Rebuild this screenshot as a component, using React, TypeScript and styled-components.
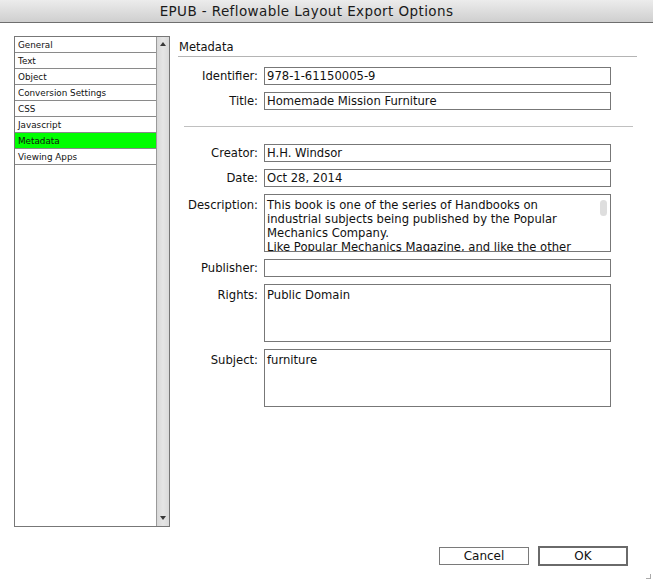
import React from 'react';
import styled, { createGlobalStyle } from 'styled-components';

const GlobalStyle = createGlobalStyle`
  html, body {
    margin: 0;
    padding: 0;
    background: #ffffff;
  }
  body {
    font-family: 'DejaVu Sans', 'Liberation Sans', sans-serif;
    color: #111;
  }
`;

const Window = styled.div`
  width: 653px;
  height: 581px;
  display: flex;
  flex-direction: column;
  background: #ffffff;
  position: relative;
  overflow: hidden;
`;

const TitleBar = styled.div`
  height: 22px;
  flex-shrink: 0;
  display: flex;
  align-items: center;
  justify-content: center;
  padding-right: 40px;
  background: linear-gradient(180deg, #ececec 0%, #dcdcdc 55%, #cfcfcf 100%);
  border-bottom: 1px solid #6e6e6e;
  font-size: 13.5px;
  letter-spacing: 0.4px;
  color: #1a1a1a;
`;

const Content = styled.div`
  display: flex;
  padding: 13px 16px 0 14px;
  gap: 8px;
`;

const ListBox = styled.div`
  width: 156px;
  height: 491px;
  box-sizing: border-box;
  border: 1px solid #777;
  display: flex;
  flex-shrink: 0;
`;

const ListItems = styled.div`
  flex: 1;
  display: flex;
  flex-direction: column;
`;

const ListItem = styled.div<{ $active?: boolean }>`
  height: 16px;
  box-sizing: border-box;
  border-bottom: 1px solid #8a8a8a;
  padding-left: 3px;
  font-size: 8.8px;
  line-height: 16px;
  background: ${(p) => (p.$active ? '#00ff00' : 'transparent')};
  color: #111;
`;

const ScrollTrack = styled.div`
  width: 13px;
  border-left: 1px solid #9a9a9a;
  background: linear-gradient(90deg, #d8d8d8, #e6e6e6 50%, #dadada);
  display: flex;
  flex-direction: column;
  justify-content: space-between;
  align-items: center;
  padding: 5px 0 6px;
  box-sizing: border-box;
`;

const Arrow = styled.div<{ $down?: boolean }>`
  width: 0;
  height: 0;
  border-left: 3.5px solid transparent;
  border-right: 3.5px solid transparent;
  ${(p) =>
    p.$down
      ? 'border-top: 4px solid #3a3a3a;'
      : 'border-bottom: 4px solid #3a3a3a;'}
`;

const Panel = styled.div`
  flex: 1;
  display: flex;
  flex-direction: column;
`;

const Heading = styled.div`
  font-size: 11.5px;
  padding: 4px 0 0 1px;
  height: 16px;
  border-bottom: 1px solid #b4b4b4;
  margin-bottom: 10px;
`;

const Form = styled.div`
  display: grid;
  grid-template-columns: 80px 347px;
  column-gap: 6px;
  row-gap: 7px;
  align-items: start;
`;

const Label = styled.div<{ $multi?: boolean }>`
  text-align: right;
  font-size: 11.6px;
  line-height: 18px;
  padding-top: ${(p) => (p.$multi ? 2 : 0)}px;
  white-space: nowrap;
`;

const Box = styled.div<{ $h?: number }>`
  position: relative;
  height: ${(p) => p.$h ?? 18}px;
  box-sizing: border-box;
  border: 1px solid #777;
  background: #fff;
  font-size: 11.6px;
  line-height: 14px;
  padding: ${(p) => (p.$h ? '3px' : '1px')} 3px 0 2px;
  overflow: hidden;
  white-space: nowrap;
`;

const Thumb = styled.div`
  position: absolute;
  top: 5px;
  right: 3px;
  width: 7px;
  height: 16px;
  border-radius: 4px;
  background: #dedede;
`;

const Divider = styled.div`
  grid-column: 1 / -1;
  height: 1px;
  background: #c0c0c0;
  margin: 9px -22px 10px 6px;
`;

const Footer = styled.div`
  display: flex;
  justify-content: flex-end;
  gap: 9px;
  padding: 19px 25px 0 0;
  align-items: center;
`;

const Button = styled.div<{ $primary?: boolean }>`
  width: 90px;
  height: ${(p) => (p.$primary ? 20 : 18)}px;
  box-sizing: border-box;
  border: ${(p) => (p.$primary ? '2px solid #6a6a6a' : '1px solid #7a7a7a')};
  background: #fff;
  font-size: 12px;
  display: flex;
  align-items: center;
  justify-content: center;
`;

const Grip = styled.div`
  position: absolute;
  right: 2px;
  bottom: 2px;
  width: 4px;
  height: 4px;
  border-right: 1px solid #aaa;
  border-bottom: 1px solid #aaa;
`;

const sections = [
  'General',
  'Text',
  'Object',
  'Conversion Settings',
  'CSS',
  'Javascript',
  'Metadata',
  'Viewing Apps',
];

const description = [
  'This book is one of the series of Handbooks on',
  'industrial subjects being published by the Popular',
  'Mechanics Company.',
  'Like Popular Mechanics Magazine, and like the other',
];

export default function App() {
  return (
    <Window>
      <GlobalStyle />
      <TitleBar>EPUB - Reflowable Layout Export Options</TitleBar>
      <Content>
        <ListBox>
          <ListItems>
            {sections.map((s) => (
              <ListItem key={s} $active={s === 'Metadata'}>
                {s}
              </ListItem>
            ))}
          </ListItems>
          <ScrollTrack>
            <Arrow />
            <Arrow $down />
          </ScrollTrack>
        </ListBox>
        <Panel>
          <Heading>Metadata</Heading>
          <Form>
            <Label>Identifier:</Label>
            <Box>978-1-61150005-9</Box>
            <Label>Title:</Label>
            <Box>Homemade Mission Furniture</Box>
            <Divider />
            <Label>Creator:</Label>
            <Box>H.H. Windsor</Box>
            <Label>Date:</Label>
            <Box>Oct 28, 2014</Box>
            <Label $multi>Description:</Label>
            <Box $h={58}>
              {description.map((line) => (
                <div key={line}>{line}</div>
              ))}
              <Thumb />
            </Box>
            <Label>Publisher:</Label>
            <Box />
            <Label $multi>Rights:</Label>
            <Box $h={58}>Public Domain</Box>
            <Label $multi>Subject:</Label>
            <Box $h={58}>furniture</Box>
          </Form>
        </Panel>
      </Content>
      <Footer>
        <Button>Cancel</Button>
        <Button $primary>OK</Button>
      </Footer>
      <Grip />
    </Window>
  );
}
